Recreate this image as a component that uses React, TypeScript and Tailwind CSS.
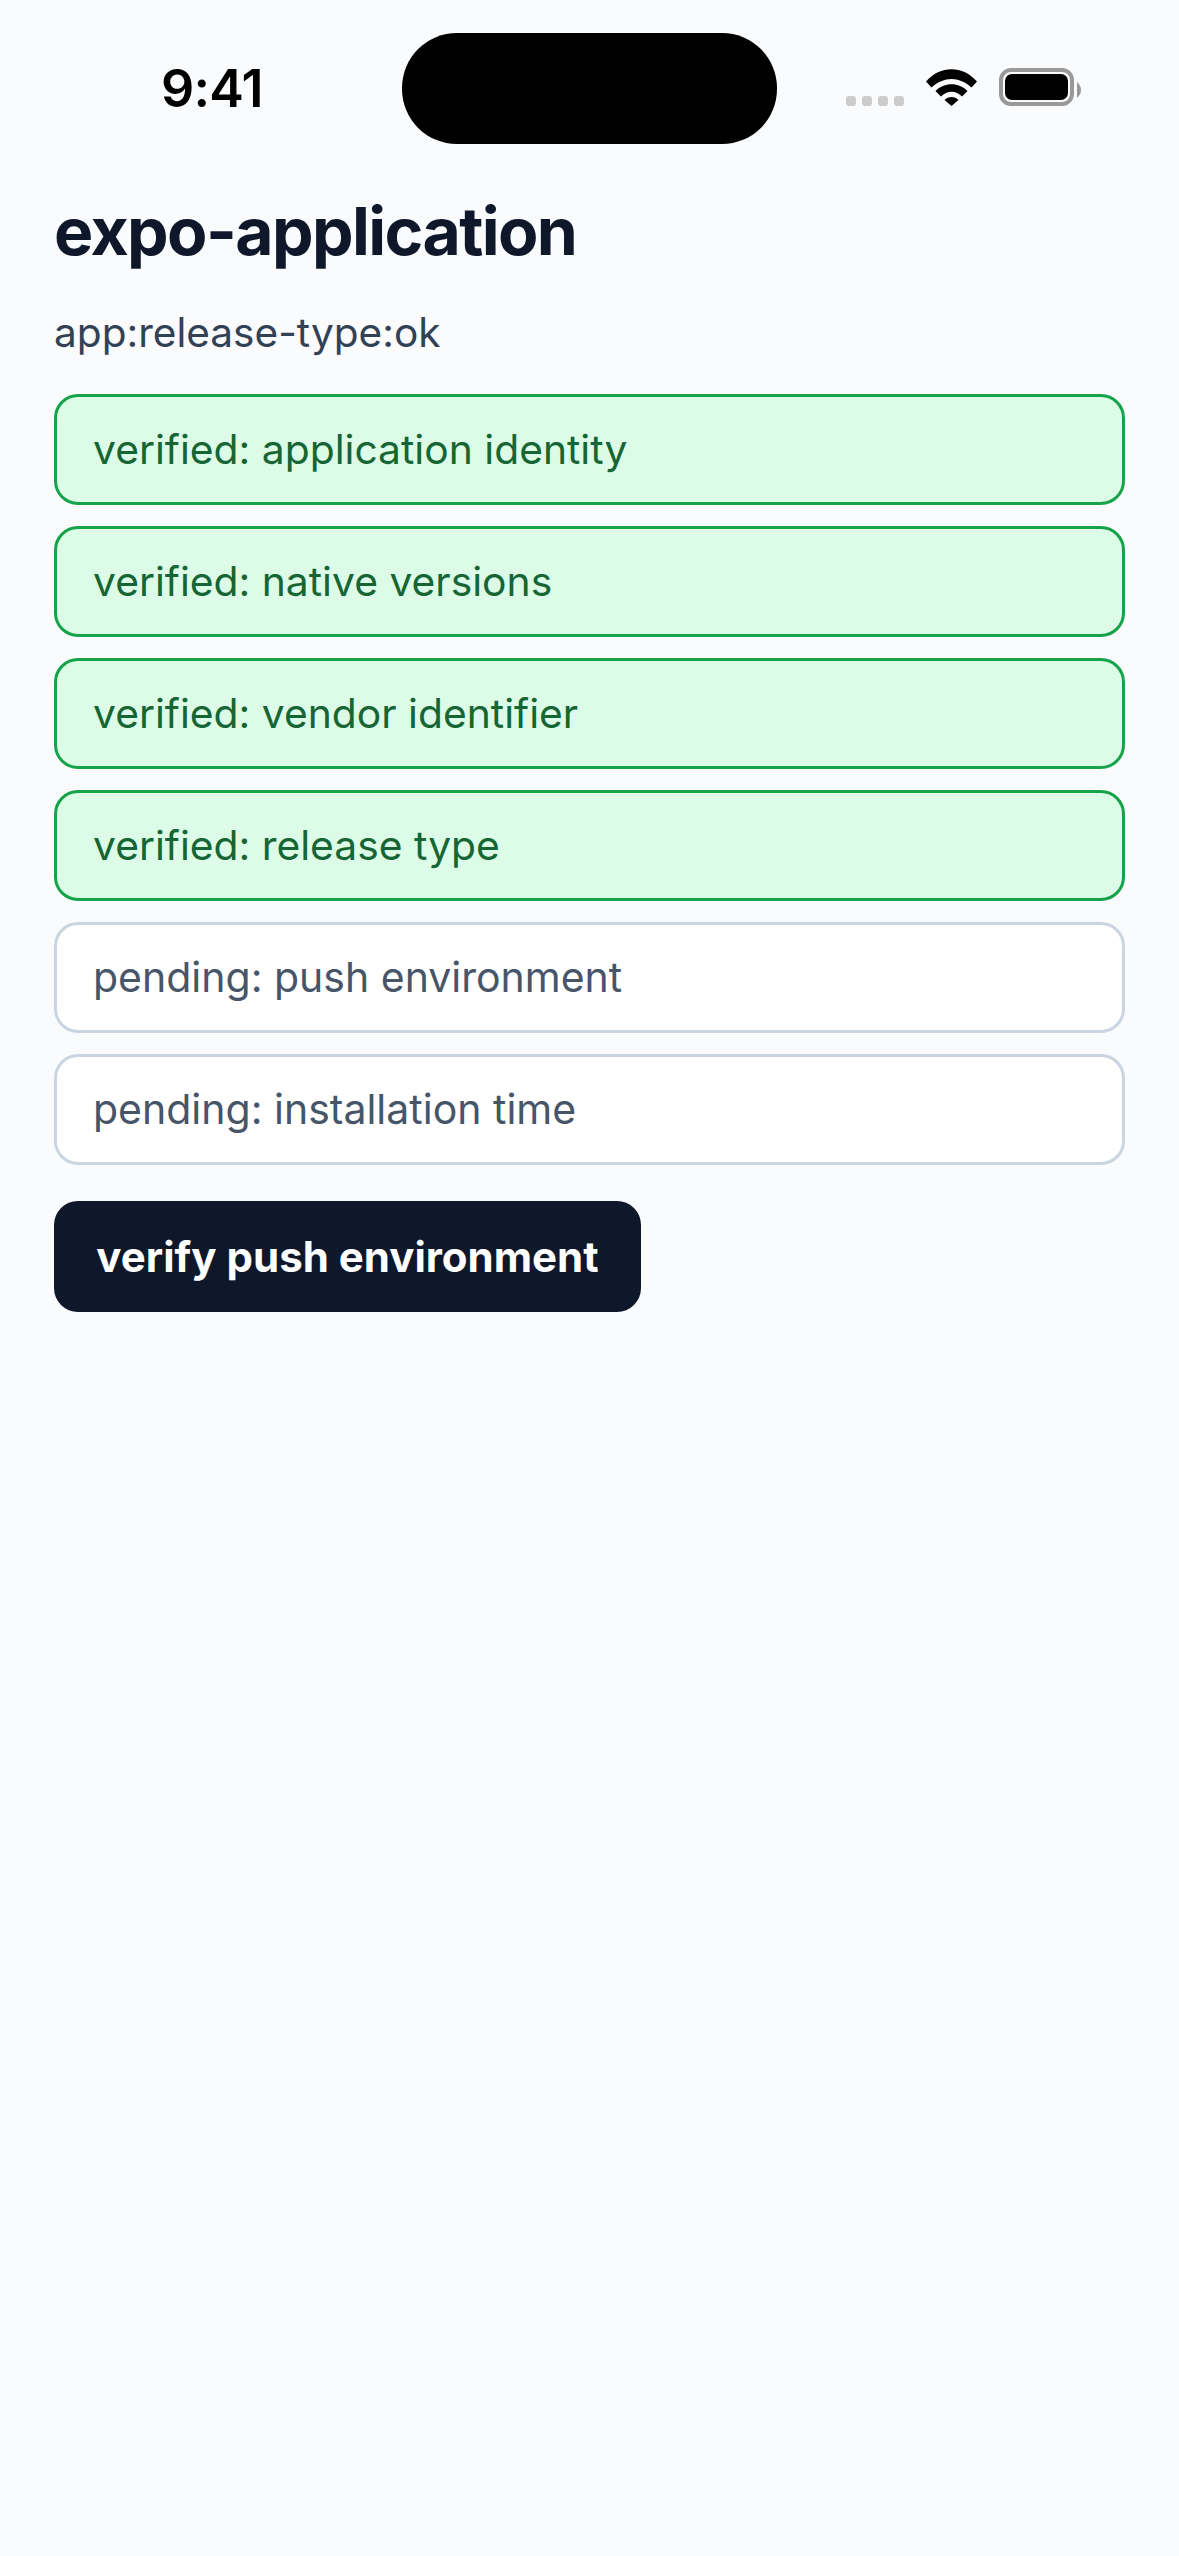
export default function App() {
  const verified = ["verified: application identity", "verified: native versions", "verified: vendor identifier", "verified: release type"];
  const pending = ["pending: push environment", "pending: installation time"];
  return (
    <div className="min-h-[2556px] w-[1179px] bg-[#f9fbfd] font-['Inter','Noto_Sans',sans-serif]">
      <div className="flex h-[144px] items-start pt-[33px]">
        <div className="w-[402px] pl-[161px] pt-[25px] text-[52px] leading-[62px] font-semibold tracking-[-0.8px] text-black">9:41</div>
        <div className="h-[111px] w-[375px] rounded-[55px] bg-black" />
        <div className="ml-[69px] flex items-end pt-[35px]">
          <div className="flex gap-[6px]">
            <span className="h-[10px] w-[10px] rounded-[3px] bg-[#cccccc]" />
            <span className="h-[10px] w-[10px] rounded-[3px] bg-[#cccccc]" />
            <span className="h-[10px] w-[10px] rounded-[3px] bg-[#cccccc]" />
            <span className="h-[10px] w-[10px] rounded-[3px] bg-[#cccccc]" />
          </div>
          <svg className="ml-[22px]" width="51" height="37" viewBox="0 0 51 37">
            <path d="M0 12.5 C14 -4 37 -4 51 12.5 L45.5 18.5 C33 7 18 7 5.500 18.5 Z" fill="#000" />
            <path d="M9.500 22 C18 13 33 13 41.500 22 L36 27.500 C30 21 21 21 15 27.500 Z" fill="#000" />
            <path d="M18.500 31 C22 27 29 27 32.500 31 L25.500 37 Z" fill="#000" />
          </svg>
          <div className="ml-[22px] box-border h-[38px] w-[75px] rounded-[12px] border-[4px] border-[#999999] p-[2px]">
            <div className="h-full w-full rounded-[7px] bg-black" />
          </div>
          <svg className="mb-[8px] ml-[3px]" width="4" height="16" viewBox="0 0 4 16">
            <path d="M0 0 C3 3 4 5 4 8 C4 11 3 13 0 16 Z" fill="#999999" />
          </svg>
        </div>
      </div>
      <div className="flex flex-col px-[54px]">
        <h1 className="mt-[48px] text-[66px] leading-[78px] font-bold tracking-[-1.6px] text-[#0f172a]">expo-application</h1>
        <p className="mt-[36px] text-[40.6px] leading-[54px] font-[380] text-[#334155]">app:release-type:ok</p>
        <div className="mt-[34px] flex flex-col gap-[21px]">
          {verified.map((t) => (
            <div key={t} className="flex h-[111px] items-center rounded-[24px] border-[3px] border-[#16a34a] bg-[#dcfce7] pl-[36px] text-[40.8px] font-[380] text-[#166534]">{t}</div>
          ))}
          {pending.map((t) => (
            <div key={t} className="flex h-[111px] items-center rounded-[24px] border-[3px] border-[#cbd5e1] bg-white pl-[36px] text-[41px] font-[380] text-[#475569]">{t}</div>
          ))}
        </div>
        <button className="mt-[36px] flex h-[111px] w-[587px] items-center justify-center rounded-[24px] bg-[#0f172a] text-[42px] font-[650] text-white">verify push environment</button>
      </div>
    </div>
  );
}
